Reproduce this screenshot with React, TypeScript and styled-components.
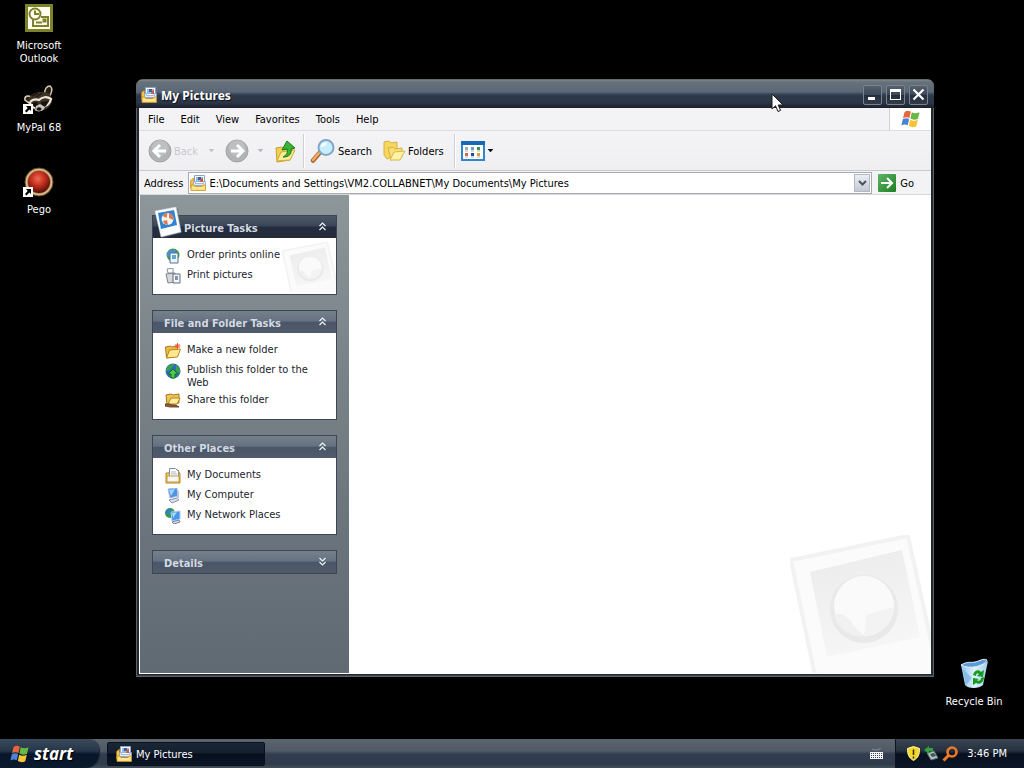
import React from 'react';
import styled, { createGlobalStyle } from 'styled-components';

const ui = '"DejaVu Sans Condensed", "Noto Sans", sans-serif';

const GlobalStyle = createGlobalStyle`
  *, *::before, *::after { box-sizing: border-box; }
  body { margin: 0; background: #000; font: 11px/13px ${ui}; color: #000; overflow: hidden; }
  button, input { font: inherit; color: inherit; margin: 0; padding: 0; border: 0; background: none; }
  a { color: inherit; text-decoration: none; }
  ul { list-style: none; margin: 0; padding: 0; }
  h1, h2 { margin: 0; font: inherit; }
  svg { display: block; flex: none; }
`;

const Desktop = styled.div`
  display: flex;
  flex-direction: column;
  height: 100vh;
  background: #000;
`;

const Workspace = styled.main`
  position: relative;
  flex: 1;
  min-height: 0;
`;

const IconColumn = styled.nav`
  display: flex;
  flex-direction: column;
  width: 77px;
  padding: 3px 0 0 1px;
`;

const Shortcut = styled.button<{ $height?: number }>`
  display: flex;
  flex-direction: column;
  align-items: center;
  gap: 6px;
  width: 76px;
  height: ${(p) => p.$height ?? 82}px;
  color: #fff;
`;

const BinSpot = styled.div`
  position: absolute;
  right: 12px;
  bottom: 30px;
`;

const Window = styled.section`
  position: absolute;
  top: 79px;
  left: 136px;
  right: 90px;
  bottom: 62px;
  display: flex;
  flex-direction: column;
  padding: 0 3px 3px;
  border-radius: 7px 7px 0 0;
  background: linear-gradient(90deg, #5b626a 0 1px, #24282f 1px calc(100% - 1px), #5b626a calc(100% - 1px));
  box-shadow: inset 0 -1px #5b626a, inset 0 -2px #3d434b;
`;

const TitleBar = styled.header`
  display: flex;
  align-items: center;
  gap: 4px;
  flex: none;
  height: 29px;
  margin: 0 -3px;
  padding: 2px 6px 0 5px;
  border-radius: 7px 7px 0 0;
  background: linear-gradient(#4d5357 0, #7b8589 1px, #67717a 3px, #5a6776 13px, #39475a 15px, #2d394b 17px, #2b3546 24px, #1b1f29 29px);
`;

const Title = styled.h1`
  flex: 1;
  padding-top: 2px;
  font: bold 12px/16px "Noto Sans", sans-serif;
  color: #fff;
  text-shadow: 1px 1px 1px #10151d;
`;

const CaptionButton = styled.button`
  display: grid;
  place-items: center;
  width: 19px;
  height: 20px;
  border: 1px solid #78828e;
  border-radius: 2px;
  background: linear-gradient(#56616e, #3b4657 50%, #242e3e 52%, #333c4b);
`;

const MenuBar = styled.nav`
  display: flex;
  flex: none;
  height: 23px;
  padding-left: 1px;
  border-bottom: 1px solid #dcdce2;
  background: #f3f3f6;
`;

const MenuButton = styled.button`
  padding: 0 8px;
`;

const BrandCell = styled.div`
  display: grid;
  place-items: center;
  width: 42px;
  margin-left: auto;
  border-left: 1px solid #d0d0d4;
  background: #fff;
`;

const ToolBar = styled.div`
  display: flex;
  align-items: center;
  flex: none;
  height: 40px;
  padding: 1px 9px 0;
  border-bottom: 1px solid #c9c9d0;
  background: linear-gradient(#f4f4f7, #efeff2);
`;

const Tool = styled.button<{ $gap?: number; $after?: number }>`
  display: flex;
  align-items: center;
  gap: ${(p) => p.$gap ?? 2}px;
  margin-right: ${(p) => p.$after ?? 10}px;
  &:disabled { color: #c8c9cd; }
`;

const Divider = styled.span`
  width: 2px;
  height: 34px;
  margin-right: 5px;
  border-left: 1px solid #cfcfd4;
  border-right: 1px solid #fff;
`;

const AddressBar = styled.form`
  display: flex;
  align-items: center;
  flex: none;
  height: 24px;
  padding: 1px 17px 0 5px;
  border-bottom: 1px solid #d9d9dc;
  background: #f3f3f6;
`;

const AddressField = styled.div`
  display: flex;
  align-items: center;
  flex: 1;
  gap: 3px;
  height: 22px;
  margin: 0 6px 0 5px;
  padding: 0 1px;
  border: 1px solid #a9abb3;
  background: #fff;
`;

const AddressInput = styled.input`
  flex: 1;
  min-width: 0;
  height: 20px;
  padding-top: 1px;
  outline: 0;
`;

const DropButton = styled.button`
  display: grid;
  place-items: center;
  width: 16px;
  height: 18px;
  border: 1px solid #b3b9c3;
  background: linear-gradient(#eceff4, #c3c9d3);
`;

const GoButton = styled.button`
  display: flex;
  align-items: center;
  gap: 4px;
`;

const Body = styled.div`
  display: flex;
  flex: 1;
  min-height: 0;
  border: solid #fff;
  border-width: 0 0 1px 1px;
  background: #fff;
`;

const Sidebar = styled.aside`
  display: flex;
  flex-direction: column;
  gap: 15px;
  flex: none;
  width: 209px;
  padding: 20px 12px 0;
  background: linear-gradient(#8d979a, #7a8488 35%, #6b747c 70%, #5f6a72);
`;

const Panel = styled.section`
  position: relative;
  border: 1px solid #3c4654;
  background: #fff;
`;

const PanelHeader = styled.button<{ $dark?: boolean }>`
  display: flex;
  align-items: center;
  justify-content: space-between;
  width: 100%;
  height: 22px;
  padding: 2px 9px 0 ${(p) => (p.$dark ? 31 : 11)}px;
  font-weight: bold;
  color: ${(p) => (p.$dark ? '#d5dae2' : '#d3dae2')};
  background: ${(p) =>
    p.$dark
      ? 'linear-gradient(#4d5866, #3a4657 45%, #232e40 50%, #262b38)'
      : 'linear-gradient(#74808a, #667281 45%, #4a5769 52%, #505a6a)'};
  & > svg { margin-bottom: 3px; }
`;

const PolaroidSpot = styled.span`
  position: absolute;
  left: 1px;
  top: -9px;
`;

const WatermarkSpot = styled.span`
  position: absolute;
  right: 0;
  bottom: 2px;
`;

const TaskList = styled.ul`
  position: relative;
  display: flex;
  flex-direction: column;
  gap: 4px;
  padding: 10px 12px;
`;

const TaskLink = styled.a`
  display: flex;
  align-items: flex-start;
  gap: 6px;
  min-height: 16px;
  color: #20242c;
`;

const Content = styled.div`
  display: flex;
  flex: 1;
  align-items: flex-end;
  justify-content: flex-end;
`;

const Taskbar = styled.footer`
  display: flex;
  flex: none;
  height: 29px;
  color: #fff;
  background: linear-gradient(#5c646c, #4f5a67 12px, #323e4f 15px, #2f3a4a 25px, #454e5a);
`;

const StartButton = styled.button`
  display: flex;
  align-items: center;
  gap: 4px;
  width: 99px;
  padding-left: 10px;
  border-radius: 0 12px 14px 0;
  font: italic bold 17px/20px "Open Sans", sans-serif;
  background: linear-gradient(#3b4a5b, #26364a 12px, #08152a 15px, #0b1a2e);
  box-shadow: 1px 0 1px #1c2531;
  text-shadow: 1px 1px 1px #000;
`;

const TaskButton = styled.button`
  display: flex;
  align-items: center;
  gap: 4px;
  width: 158px;
  margin: 3px 0 2px 8px;
  padding-left: 8px;
  border: 1px solid #0a111c;
  border-radius: 2px;
  background: linear-gradient(#1b2635, #141f2f 45%, #050e1d 50%, #0b1726);
`;

const Keyboard = styled.span`
  display: grid;
  place-items: center;
  width: 14px;
  margin: 0 12px 0 auto;
`;

const Tray = styled.div`
  display: flex;
  align-items: center;
  gap: 4px;
  padding: 0 17px 0 11px;
  border-left: 1px solid #10151c;
  background: linear-gradient(#3a4654, #25313f 12px, #07101e 15px, #0b1626);
`;

const Clock = styled.time`
  margin-left: 5px;
`;

const Pointer = styled.span`
  position: absolute;
  left: 771px;
  top: 93px;
  pointer-events: none;
`;

const PicturesIcon = ({ size = 16 }: { size?: number }) => (
  <svg width={size} height={size} viewBox="0 0 16 16">
    <path d="M.5 5.500l3-2.500v10h-3z" fill="#f6c248" stroke="#b77a12" strokeWidth=".6" />
    <path d="M4.500.5h10v10h-10z" fill="#f8fbff" stroke="#8ba3c6" />
    <path d="M6 2h7v5H6z" fill="#8dbbe8" />
    <path d="M8 2h3v3H8z" fill="#4a5f8c" />
    <path d="M11 4l2-1v4h-3z" fill="#d6523a" />
    <path d="M3.500 6.500h2v2h8v-2h2v4h-12z" fill="#dfe8f5" stroke="#8aa2c8" strokeWidth=".7" />
    <path d="M1 10h3l1 1.500h7l1-1.500h2.500v5.500H1z" fill="#ffdc74" stroke="#c8922a" strokeWidth=".8" />
    <path d="M2.500 13h11" stroke="#fff2b8" />
  </svg>
);

const WindowsFlag = ({ size = 20 }: { size?: number }) => (
  <svg width={size} height={size} viewBox="0 0 20 20">
    <path d="M3.500 3.200C5.500 1.500 7.700 1.500 9.800 2.800L8.400 9C6.300 7.800 4.200 7.900 2 9.300z" fill="#e8653a" />
    <path d="M10.800 3.300c2.700 1.400 5 1.200 7.700-.1L17 9.700c-2.700 1.400-5.200 1.300-7.600-.1z" fill="#68b845" />
    <path d="M1.800 10.300c2.200-1.300 4.300-1.400 6.400-.2L6.800 16.300c-2-1.200-4.200-1.100-6.400.2z" fill="#4a83d4" />
    <path d="M9.200 10.700c2.500 1.400 5 1.400 7.600 0l-1.500 6.500c-2.600 1.400-5 1.200-7.500-.2z" fill="#f7c433" />
  </svg>
);

const ShortcutBadge = () => (
  <g>
    <path d="M0 20h10v10H0z" fill="#fff" />
    <path d="M3 22h5v5l-1.600-1.500L3.500 28.500 2 27l2.700-2.900z" fill="#000" />
  </g>
);

const OutlookIcon = () => (
  <svg width="30" height="30" viewBox="0 0 30 30">
    <path d="M1 1h28v28H1z" fill="#7d8127" />
    <path d="M4 4h22v22H4z" fill="#fffef0" />
    <g fill="none" stroke="#7d8127" strokeWidth="2">
      <path d="M9 17v6h15v-9h-7" />
      <circle cx="11" cy="11" r="5.500" fill="#fffef0" />
      <path d="M11 7.500V11h4" />
      <path d="M12 19.500h6" />
      <path d="M19.500 16.500h2v2h-2z" />
    </g>
  </svg>
);

const RaccoonIcon = () => (
  <svg width="32" height="30" viewBox="0 0 32 30">
    <path d="M22 9c-1-5 2-8 5-8 3 2 2 7-1 11z" fill="#241d16" stroke="#d8c8ac" strokeWidth="1.500" />
    <path d="M2 15c-1-4 3-5 6-3l-2 6z" fill="#2a211a" stroke="#e0d2b8" strokeWidth="1.500" />
    <path d="M6 13c3-5 9-7 15-6 5 0 8 4 8 9-1 6-6 9-11 10C11 27 5 22 6 13z" fill="#3d3427" />
    <path d="M9 11l6-3M13 12l6-4" stroke="#1d1813" strokeWidth="1.500" />
    <path d="M7 17c3-3 6-3 9-2 3-3 8-4 12-1-1 4-3 6-6 7M7 17c0 3 2 5 5 6" fill="none" stroke="#efe7d6" strokeWidth="2.200" />
    <path d="M9 18l5-1 1 4-4 1zM18 17l8-1-3 5-4 1z" fill="#17120f" />
    <path d="M13 21l4-2 5 3c-1 4-7 6-10 3z" fill="#c9c4bb" />
    <ellipse cx="16" cy="24" rx="2.500" ry="1.800" fill="#17120f" />
    <g transform="translate(0 -1)"><ShortcutBadge /></g>
  </svg>
);

const PegoIcon = () => (
  <svg width="32" height="30" viewBox="0 0 32 30">
    <defs>
      <radialGradient id="pego" cx=".45" cy=".35" r=".65">
        <stop offset="0" stopColor="#ee6a54" />
        <stop offset=".5" stopColor="#c12d1d" />
        <stop offset="1" stopColor="#560d08" />
      </radialGradient>
    </defs>
    <circle cx="16" cy="15" r="14" fill="#a3814f" stroke="#6b4d2b" />
    <circle cx="16" cy="15" r="12.500" fill="none" stroke="#d8bf92" strokeWidth="1.500" />
    <circle cx="16" cy="15" r="11" fill="url(#pego)" />
    <ShortcutBadge />
  </svg>
);

const RecycleIcon = () => (
  <svg width="32" height="32" viewBox="0 0 32 32">
    <defs>
      <linearGradient id="bin" x2="1">
        <stop offset="0" stopColor="#8fc4ec" />
        <stop offset=".5" stopColor="#dff1fc" />
        <stop offset="1" stopColor="#a5cdea" />
      </linearGradient>
    </defs>
    <path d="M3 8l4 20c3 4 14 4 18 0l5-24c-7 5-18 6-27 4z" fill="url(#bin)" />
    <path d="M3 8C10 4 12 6 17 5s8-4 12-2c-2 6-18 10-26 5z" fill="#5b9bd8" stroke="#e5f4ff" />
    <path d="M5 12l9 9-6 7z" fill="#6caade" opacity=".6" />
    <g fill="#159a22">
      <path d="M15 18c1-5 6-6 8-3l3-2-1 7-6-1 2-2c-2-2-3 0-3 2z" />
      <path d="M26 20c0 6-5 8-8 6l-3 2v-7l6 1-2 1c2 2 4 0 4-2z" />
    </g>
  </svg>
);

const RoundArrow = ({ back }: { back?: boolean }) => (
  <svg width="24" height="24" viewBox="0 0 24 24">
    <circle cx="12" cy="12" r="11" fill="#b2b3b5" stroke="#a2a3a6" />
    <circle cx="12" cy="9" r="8" fill="#c6c7c9" opacity=".6" />
    <path d={back ? 'M12 6l-6 6 6 6M7 12h11' : 'M12 6l6 6-6 6M17 12H6'} fill="none" stroke="#fff" strokeWidth="3" />
  </svg>
);

const Caret = ({ color = '#000' }: { color?: string }) => (
  <svg width="7" height="4" viewBox="0 0 7 4"><path d="M1 0h5L3.500 3z" fill={color} stroke={color} strokeWidth=".5" /></svg>
);

const UpIcon = () => (
  <svg width="22" height="24" viewBox="0 0 22 24">
    <path d="M2 9l6-1 2 2 9-1-3 12-13 2z" fill="#f0ce57" stroke="#c7a02e" />
    <path d="M3 22l4-9 14-2-5 10z" fill="#fcec96" stroke="#d0ab38" />
    <path d="M9 18c4-2 5-5 4-8l-5 1 5-9 8 7-4 1c1 5-2 8-8 8z" fill="#39b536" stroke="#14771a" />
  </svg>
);

const SearchIcon = () => (
  <svg width="26" height="26" viewBox="0 0 26 26">
    <path d="M9.500 15L3 22.500" stroke="#a8622d" strokeWidth="4.500" strokeLinecap="round" />
    <path d="M9 15L3 22" stroke="#f2ad6a" strokeWidth="2.500" strokeLinecap="round" />
    <circle cx="16" cy="9.500" r="7.500" fill="#c8edfb" stroke="#81a6c9" strokeWidth="2" />
    <path d="M11 9c0-3 3-5 6-4.500-1 3-3 4-6 4.500z" fill="#fff" />
  </svg>
);

const FoldersIcon = () => (
  <svg width="24" height="22" viewBox="0 0 24 22">
    <path d="M2 2l5-1 2 2 6-1v13L5 19 2 15z" fill="#f7d75f" stroke="#d6b040" />
    <path d="M6 8l5-1 2 2 7-1v9L9 20z" fill="#f8de75" stroke="#d6b040" />
    <path d="M8 20l4-8 11-1-5 9z" fill="#fff3a8" stroke="#dab848" />
  </svg>
);

const ViewsIcon = () => (
  <svg width="24" height="20" viewBox="0 0 24 20">
    <path d="M1 1h22v18H1z" fill="#fff" stroke="#2f86cf" strokeWidth="2" />
    <path d="M0 0h24v4H0z" fill="#1968b8" />
    {[
      [4, 6, '#9aaac5'], [10, 6, '#6f9bc6'], [16, 6, '#3b9144'],
      [4, 12, '#d3694f'], [10, 12, '#1c4fa0'], [16, 12, '#dc9d36'],
    ].map(([x, y, c]) => (
      <g key={`${x}-${y}`}>
        <path d={`M${x} ${y}h3v3h-3z`} fill={String(c)} />
        <path d={`M${x} ${Number(y) + 4}h3`} stroke="#aab3c0" />
      </g>
    ))}
  </svg>
);

const Chevron = ({ down }: { down?: boolean }) => (
  <svg width="9" height="9" viewBox="0 0 9 9">
    <path
      d={down ? 'M1.500 1l3 3 3-3M1.500 5l3 3 3-3' : 'M1.500 4l3-3 3 3M1.500 8l3-3 3 3'}
      fill="none" stroke="#f0f3f7" strokeWidth="1.200"
    />
  </svg>
);

const GoIcon = () => (
  <svg width="18" height="18" viewBox="0 0 18 18">
    <defs>
      <linearGradient id="go" x2="1" y2="1">
        <stop offset="0" stopColor="#5db567" />
        <stop offset="1" stopColor="#1d7f22" />
      </linearGradient>
    </defs>
    <rect width="18" height="18" rx="1" fill="url(#go)" />
    <path d="M3 9h11M9 4l5 5-5 5" fill="none" stroke="#fff" strokeWidth="2" />
  </svg>
);

const Polaroid = () => (
  <svg width="28" height="32" viewBox="0 0 28 32">
    <path d="M2 5l22-4 4 25-20 5z" fill="#596573" opacity=".5" />
    <path d="M1 4l21-4 5 25-20 5z" fill="#fbfcfe" stroke="#cdd4de" strokeWidth=".5" />
    <path d="M4 6l16-3 3 15-16 4z" fill="#2f83cf" />
    <circle cx="13.500" cy="12" r="6" fill="#f2f2f2" />
    <path d="M8.500 9c1-2 3-3 5-3l-1 5zM15 6c3 1 5 4 4 7l-4-2zM9 14l4-1 1 5c-2 0-4-1-5-4z" fill="#e07a4d" />
  </svg>
);

const Watermark = ({ width, height }: { width: number; height: number }) => (
  <svg width={width} height={height} viewBox="0 0 141 138" preserveAspectRatio="none">
    <defs>
      <linearGradient id="mat" x2=".3" y2="1">
        <stop offset="0" stopColor="#ebebeb" />
        <stop offset="1" stopColor="#f6f6f6" />
      </linearGradient>
    </defs>
    <path d="M1 25L118 1l26 118v22H25z" fill="#fbfbfb" stroke="#f2f2f2" strokeWidth="4" />
    <path d="M20 37l92-22 18 87-93 20z" fill="url(#mat)" />
    <circle cx="74" cy="74" r="34" fill="#e9e9e9" />
    <circle cx="74" cy="71" r="30" fill="#fafafa" />
    <path d="M44 79c9-1 15 3 20 12l11 10c-15 2-28-7-31-22z" fill="#f1f1f1" />
    <path d="M74 101l2-21 27-8c0 16-12 28-29 29z" fill="#f3f3f3" />
  </svg>
);

const Small = ({ children }: { children: React.ReactNode }) => (
  <svg width="16" height="16" viewBox="0 0 16 16">{children}</svg>
);

const icons = {
  order: (
    <Small>
      <circle cx="8" cy="7" r="6.500" fill="#3a9d4c" />
      <path d="M2 5c3-4 7-4 9-3L8 7l-6 2z" fill="#4d8fd5" />
      <path d="M5 5h8v10H5z" fill="#eef4fb" stroke="#5b7091" />
      <path d="M7 7h4v4H7z" fill="#66a4d9" />
    </Small>
  ),
  print: (
    <Small>
      <path d="M2 1l6-1v5H3z" fill="#fff" stroke="#8a8f98" />
      <path d="M1 6l9-1v9L3 15z" fill="#d6d8dc" stroke="#7c818b" />
      <path d="M8 6h7v9H8z" fill="#f5f6f8" stroke="#636a78" />
      <path d="M10 8h3v4h-3z" fill="#7997bd" />
    </Small>
  ),
  folder: (
    <Small>
      <path d="M.5 4l5-1 1 1 6-1v10l-11 2z" fill="#edbd43" stroke="#a8761d" />
      <path d="M1.500 15l3-8 11-1-3 8z" fill="#ffe88c" stroke="#b58429" />
      <path d="M12.500 0v6M9.500 3h6M10.500 1l4 4M14.500 1l-4 4" stroke="#e6532c" />
    </Small>
  ),
  publish: (
    <Small>
      <circle cx="8" cy="8" r="7.500" fill="#2b6fb5" />
      <path d="M1 8c0-4 4-7 8-7 0 3-3 3-4 6zM11 2c3 2 5 5 4 9l-4-3z" fill="#3aa247" />
      <path d="M8 6l5 5h-3v4H6v-4H3z" fill="#4bcb45" stroke="#17701d" />
    </Small>
  ),
  share: (
    <Small>
      <path d="M1 2l5-1 2 1 6-1v9L2 12z" fill="#edc552" stroke="#a8761d" />
      <path d="M3 11l3-6h9l-3 6z" fill="#ffed99" stroke="#b58429" />
      <path d="M0 11h4l2 1h5l3 2H5l-5-1z" fill="#a85d3a" stroke="#4a3420" strokeWidth=".8" />
    </Small>
  ),
  documents: (
    <Small>
      <path d="M1 5h3l1-3h8l2 4v9H1z" fill="#f7cf58" stroke="#b5851f" />
      <path d="M4.500.5h6l3 3v8h-9z" fill="#fff" stroke="#7b8faf" />
      <path d="M6 4h5M6 6h6" stroke="#a7b5ca" />
      <path d="M2 8h12v6H2z" fill="#f4f6fa" stroke="#c79b33" />
    </Small>
  ),
  computer: (
    <Small>
      <path d="M3 1l9-1 1 8-8 2z" fill="#4f93e4" stroke="#a9bedb" />
      <path d="M4 2l6-1-4 7z" fill="#a3d2fa" />
      <path d="M4 12l8-2 2 2-7 3z" fill="#d7deea" stroke="#8795ae" />
      <path d="M12 2l2 1v7l-2 1z" fill="#bcc8da" />
    </Small>
  ),
  network: (
    <Small>
      <circle cx="5" cy="5" r="5" fill="#2c9a54" />
      <path d="M0 5c2-4 5-4 7-4L4 6z" fill="#3a7dd0" />
      <path d="M6 4l9-1v8l-8 2z" fill="#4796ec" stroke="#b2c9e8" />
      <path d="M7 5l5-1-4 6z" fill="#a6dafa" />
      <path d="M7 14l7-2 1 2-6 2z" fill="#d7deea" stroke="#7384a1" />
    </Small>
  ),
};

type TaskItem = [keyof typeof icons, string];

const TaskPanel = ({ title, items, featured }: { title: string; items?: TaskItem[]; featured?: boolean }) => (
  <Panel>
    <h2>
      <PanelHeader $dark={featured} aria-expanded={!!items}>
        {title}
        <Chevron down={!items} />
      </PanelHeader>
    </h2>
    {featured && <PolaroidSpot><Polaroid /></PolaroidSpot>}
    {featured && <WatermarkSpot><Watermark width={54} height={50} /></WatermarkSpot>}
    {items && (
      <TaskList>
        {items.map(([icon, label]) => (
          <li key={label}>
            <TaskLink href="#">{icons[icon]}<span>{label}</span></TaskLink>
          </li>
        ))}
      </TaskList>
    )}
  </Panel>
);

export default function App() {
  return (
    <Desktop>
      <GlobalStyle />
      <Workspace>
        <IconColumn aria-label="Desktop">
          <Shortcut><OutlookIcon /><span>Microsoft<br />Outlook</span></Shortcut>
          <Shortcut><RaccoonIcon /><span>MyPal 68</span></Shortcut>
          <Shortcut><PegoIcon /><span>Pego</span></Shortcut>
        </IconColumn>
        <BinSpot>
          <Shortcut $height={52}><RecycleIcon /><span>Recycle Bin</span></Shortcut>
        </BinSpot>

        <Window aria-label="My Pictures">
          <TitleBar>
            <PicturesIcon />
            <Title>My Pictures</Title>
            <CaptionButton aria-label="Minimize">
              <svg width="13" height="13" viewBox="0 0 13 13"><path d="M2 9h7v3H2z" fill="#fff" /></svg>
            </CaptionButton>
            <CaptionButton aria-label="Maximize">
              <svg width="13" height="13" viewBox="0 0 13 13"><path d="M1 1h11v11H1zM2 4h9v7H2z" fill="#fff" fillRule="evenodd" /></svg>
            </CaptionButton>
            <CaptionButton aria-label="Close">
              <svg width="13" height="13" viewBox="0 0 13 13"><path d="M1.500 1.500l10 10M11.500 1.500l-10 10" stroke="#fff" strokeWidth="2.200" /></svg>
            </CaptionButton>
          </TitleBar>

          <MenuBar>
            {['File', 'Edit', 'View', 'Favorites', 'Tools', 'Help'].map((m) => (
              <MenuButton key={m}>{m}</MenuButton>
            ))}
            <BrandCell><WindowsFlag /></BrandCell>
          </MenuBar>

          <ToolBar>
            <Tool disabled><RoundArrow back />Back</Tool>
            <Tool disabled aria-label="Back history"><Caret color="#c3c4c8" /></Tool>
            <Tool disabled $gap={8} aria-label="Forward"><RoundArrow /><Caret color="#b4b5ba" /></Tool>
            <Tool $after={7} aria-label="Up"><UpIcon /></Tool>
            <Divider />
            <Tool><SearchIcon />Search</Tool>
            <Tool><FoldersIcon />Folders</Tool>
            <Divider />
            <Tool aria-label="Views"><ViewsIcon /><Caret /></Tool>
          </ToolBar>

          <AddressBar onSubmit={(e) => e.preventDefault()}>
            <label htmlFor="address">Address</label>
            <AddressField>
              <PicturesIcon />
              <AddressInput id="address" defaultValue="E:\Documents and Settings\VM2.COLLABNET\My Documents\My Pictures" />
              <DropButton type="button" aria-label="Show addresses">
                <svg width="9" height="6" viewBox="0 0 9 6"><path d="M1 1l3.500 3.500L8 1" fill="none" stroke="#4a5361" strokeWidth="2" /></svg>
              </DropButton>
            </AddressField>
            <GoButton><GoIcon />Go</GoButton>
          </AddressBar>

          <Body>
            <Sidebar>
              <TaskPanel featured title="Picture Tasks" items={[['order', 'Order prints online'], ['print', 'Print pictures']]} />
              <TaskPanel
                title="File and Folder Tasks"
                items={[['folder', 'Make a new folder'], ['publish', 'Publish this folder to the Web'], ['share', 'Share this folder']]}
              />
              <TaskPanel
                title="Other Places"
                items={[['documents', 'My Documents'], ['computer', 'My Computer'], ['network', 'My Network Places']]}
              />
              <TaskPanel title="Details" />
            </Sidebar>
            <Content><Watermark width={141} height={138} /></Content>
          </Body>
        </Window>

        <Pointer>
          <svg width="14" height="21" viewBox="0 0 14 21">
            <path d="M1 1v15l3.500-3.200L7 18.500l2.600-1.100L7.200 12H12z" fill="#fff" stroke="#1a1a1a" />
          </svg>
        </Pointer>
      </Workspace>

      <Taskbar>
        <StartButton><WindowsFlag />start</StartButton>
        <TaskButton><PicturesIcon />My Pictures</TaskButton>
        <Keyboard>
          <svg width="13" height="11" viewBox="0 0 13 11">
            <path d="M2 2c2-2 3 1 5 0s3-1 4-2" fill="none" stroke="#8e959f" />
            <path d="M0 4h13v7H0z" fill="#f2f4f6" />
            <path d="M1 5.500h11M1 7.500h11M1 9.500h11" stroke="#3a4452" strokeDasharray="1 1" />
          </svg>
        </Keyboard>
        <Tray>
          <svg width="13" height="15" viewBox="0 0 13 15">
            <path d="M6.500.5l6 2c0 6-1 9-6 12-5-3-6-6-6-12z" fill="#f3d82c" stroke="#fff6a8" />
            <path d="M6.500 3.500V9M6.500 10.500v2" stroke="#3b3305" strokeWidth="1.600" />
          </svg>
          <svg width="14" height="15" viewBox="0 0 14 15">
            <path d="M3 7l7-2 4 7-7 2z" fill="#b5bec4" stroke="#5c6a70" />
            <path d="M6 8l4-1 2 3-4 1z" fill="#35584e" />
            <path d="M0 4l5-4v2h4v3H5v3z" fill="#2fa33c" />
          </svg>
          <svg width="16" height="16" viewBox="0 0 16 16">
            <circle cx="10" cy="6" r="4.500" fill="none" stroke="#f07a28" strokeWidth="2.600" />
            <path d="M6.500 9.500L1.500 14.500" stroke="#f07a28" strokeWidth="3" />
          </svg>
          <Clock>3:46 PM</Clock>
        </Tray>
      </Taskbar>
    </Desktop>
  );
}
